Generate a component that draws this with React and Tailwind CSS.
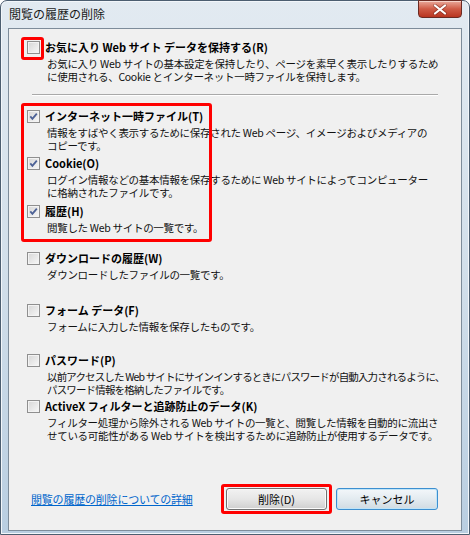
const items = [
  {
    label: 'インターネット一時ファイル(T)',
    lines: ['情報をすばやく表示するために保存された Web ページ、イメージおよびメディアの', 'コピーです。'],
    checked: true,
    gap: 'mt-[13px]',
  },
  {
    label: 'Cookie(O)',
    lines: ['ログイン情報などの基本情報を保存するために Web サイトによってコンピューター', 'に格納されたファイルです。'],
    checked: true,
    gap: 'mt-[4px]',
  },
  { label: '履歴(H)', lines: ['閲覧した Web サイトの一覧です。'], checked: true, gap: 'mt-[5px]' },
  { label: 'ダウンロードの履歴(W)', lines: ['ダウンロードしたファイルの一覧です。'], gap: 'mt-[17px]' },
  { label: 'フォーム データ(F)', lines: ['フォームに入力した情報を保存したものです。'], gap: 'mt-[22px]' },
  {
    label: 'パスワード(P)',
    lines: ['以前アクセスした Web サイトにサインインするときにパスワードが自動入力されるように、', 'パスワード情報を格納したファイルです。'],
    tight: true,
    gap: 'mt-[20px]',
  },
  {
    label: 'ActiveX フィルターと追跡防止のデータ(K)',
    lines: ['フィルター処理から除外される Web サイトの一覧と、閲覧した情報を自動的に流出さ', 'せている可能性がある Web サイトを検出するために追跡防止が使用するデータです。'],
    gap: 'mt-[3px]',
  },
];

function Check({ checked }) {
  return (
    <div className="w-[13px] h-[13px] shrink-0 border border-[#8f8f8f] bg-gradient-to-br from-[#d6d6d6] to-[#f8f8f8] shadow-[inset_0_0_0_1px_#f3f3f3]">
      {checked && (
        <svg viewBox="0 0 11 11" className="w-[11px] h-[11px]">
          <path d="M2.3 5.4 L4.4 7.8 L8.8 2.6" fill="none" stroke="#4d6296" strokeWidth="1.8" />
        </svg>
      )}
    </div>
  );
}

function Item({ label, lines, checked, tight, className }) {
  return (
    <div className={className}>
      <div className="flex items-center h-[14px]">
        <Check checked={checked} />
        <span className="ml-[5px] text-[11px] font-bold leading-[14px] whitespace-nowrap text-black">{label}</span>
      </div>
      <div
        className={
          tight
            ? 'mt-[3px] ml-[20px] text-[10.5px] tracking-[-0.85px] leading-[13px] text-[#111]'
            : 'mt-[3px] ml-[20px] text-[10.5px] tracking-[-0.3px] leading-[13px] text-[#111]'
        }
      >
        {lines.map((l) => (
          <div key={l} className="whitespace-nowrap">{l}</div>
        ))}
      </div>
    </div>
  );
}

export default function App() {
  return (
    <div className="w-[470px] h-[535px] font-['Noto_Sans_CJK_JP',sans-serif] bg-white">
      <div className="w-full h-full flex flex-col rounded-t-[7px] border border-[#4c5e70] bg-gradient-to-b from-[#e2eaf1] via-[#d2dfea] to-[#b9cee1] shadow-[inset_0_0_0_1px_#f2f6fa]">
        {/* title bar */}
        <div className="h-[27px] flex items-start shrink-0">
          <span className="pl-[8px] pt-[5px] text-[12px] leading-[16px] text-[#1a1a1a]">閲覧の履歴の削除</span>
          <div className="ml-auto mr-[7px] -mt-px w-[44px] h-[18px] flex items-center justify-center rounded-b-[4px] border border-[#6b2a22] bg-gradient-to-b from-[#e9a99b] via-[#cf5a45] to-[#b8341f] shadow-[inset_0_1px_0_#f6d2c8]">
            <svg viewBox="0 0 14 11" className="w-[14px] h-[11px]">
              <path d="M2 1.5 L12 9.5 M12 1.5 L2 9.5" stroke="#5a1a12" strokeWidth="3.6" strokeLinecap="round" opacity="0.45" />
              <path d="M2 1.5 L12 9.5 M12 1.5 L2 9.5" stroke="#ffffff" strokeWidth="2.2" strokeLinecap="round" />
            </svg>
          </div>
        </div>

        {/* client area */}
        <div className="relative ml-[7px] w-[454px] h-[503px] border border-[#7d8c9a] bg-[#f0f0f0] flex flex-col pl-[18px]">
          <Item
            className="mt-[11px]"
            label="お気に入り Web サイト データを保持する(R)"
            lines={['お気に入り Web サイトの基本設定を保持したり、ページを素早く表示したりするため', 'に使用される、Cookie とインターネット一時ファイルを保持します。']}
          />
          <div className="mt-[11px] ml-[5px] w-[406px] h-[2px] border-t border-[#a9a9a9] border-b border-b-white" />
          {items.map((it) => (
            <Item key={it.label} className={it.gap} label={it.label} lines={it.lines} checked={it.checked} tight={it.tight} />
          ))}

          <div className="mt-[46px] flex items-center h-[22px] pr-[23px]">
            <span className="ml-[4px] text-[11px] tracking-[-0.2px] leading-[14px] text-[#0066cc] underline whitespace-nowrap">
              閲覧の履歴の削除についての詳細
            </span>
            <div className="ml-auto flex gap-[9px]">
              <button className="w-[101px] h-[22px] rounded-[3px] border border-[#707070] bg-gradient-to-b from-[#f2f2f2] via-[#e6e6e6] to-[#cfcfcf] shadow-[inset_0_0_0_1px_#fbfbfb] text-[11px] text-black">
                削除(D)
              </button>
              <button className="w-[102px] h-[22px] rounded-[3px] border border-[#3c8fd0] bg-gradient-to-b from-[#f3f7fa] via-[#e3ebf0] to-[#d1dbe2] shadow-[inset_0_0_0_1px_#bfe4f8] text-[11px] text-black">
                キャンセル
              </button>
            </div>
          </div>

          {/* red highlight marks */}
          <div className="absolute left-[12px] top-[8px] w-[23px] h-[23px] border-[3px] border-[#ff0000] rounded-[3px]" />
          <div className="absolute left-[12px] top-[74px] w-[191px] h-[139px] border-[3px] border-[#ff0000] rounded-[3px]" />
          <div className="absolute left-[212px] top-[455px] w-[111px] h-[30px] border-[3px] border-[#ff0000] rounded-[3px]" />
        </div>
      </div>
    </div>
  );
}
